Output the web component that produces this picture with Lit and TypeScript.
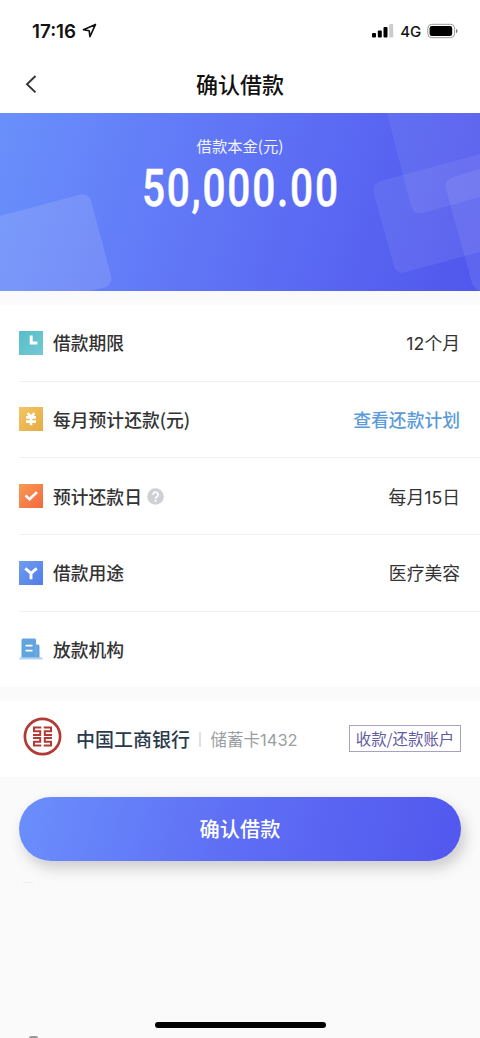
import { LitElement, html, css, svg } from "lit";
import { customElement, property } from "lit/decorators.js";

const icons: Record<string, unknown> = {
  term: svg`<defs><linearGradient id="g" x1="0" y1="0" x2="1" y2="1"><stop offset="0" stop-color="#55bfc9"/><stop offset="1" stop-color="#75c8d3"/></linearGradient></defs>
    <rect width="24" height="24" fill="url(#g)"/><path d="M12.2 4.4v7.6h6.2" fill="none" stroke="#fff" stroke-width="3"/>`,
  monthly: svg`<defs><linearGradient id="g" x1="0" y1="0" x2="1" y2="1"><stop offset="0" stop-color="#f3c562"/><stop offset="1" stop-color="#e5ab46"/></linearGradient></defs>
    <rect width="24" height="24" fill="url(#g)"/><path d="M8.6 6.200L12 10l3.400-3.800M7 10.400h10M7 14.600h10M12 9.800v8.400" fill="none" stroke="#fff" stroke-width="2.600"/>`,
  day: svg`<defs><linearGradient id="g" x1="0" y1="0" x2="1" y2="1"><stop offset="0" stop-color="#f79a55"/><stop offset="1" stop-color="#f4683f"/></linearGradient></defs>
    <rect width="24" height="24" fill="url(#g)"/><path d="M6.500 11.400l4 3.900 7.400-7" fill="none" stroke="#fff" stroke-width="2.600"/>`,
  purpose: svg`<defs><linearGradient id="g" x1="0" y1="0" x2="1" y2="1"><stop offset="0" stop-color="#6f9df0"/><stop offset="1" stop-color="#527ce6"/></linearGradient></defs>
    <rect width="24" height="24" fill="url(#g)"/><path d="M6.300 7.400l5.700 4.900 5.700-4.900M12 11.500v6.800" fill="none" stroke="#fff" stroke-width="2.900"/>`,
  lender: svg`<path d="M1 20.300h22l1 2.200H0z" fill="#b5d3f2"/><path d="M4 1.500h11.500a1.500 1.500 0 0 1 1.500 1.500v4.500h2a1.500 1.500 0 0 1 1.500 1.500v11.500H2.500V3A1.500 1.500 0 0 1 4 1.500z" fill="#62a4df"/>
    <path d="M17 7.500v13" stroke="#8abbe8" stroke-width=".6"/><path d="M6.500 8.600h7M6.500 13.600h7" stroke="#fff" stroke-width="1.800"/>`,
};

@customElement("loan-row")
class LoanRow extends LitElement {
  @property() icon = "";
  @property() label = "";
  @property() value = "";
  @property({ type: Boolean }) link = false;
  @property({ type: Boolean }) help = false;

  static styles = css`
    :host { display: flex; height: 76.650px; margin-left: 19px; padding-right: 20px; box-sizing: border-box; align-items: center; border-bottom: 1px solid #f1f1f1; font-size: 17.800px; line-height: 26px; color: #333; }
    :host([last]) { border-bottom-color: transparent; }
    .icon { width: 24px; height: 24px; margin-right: 10px; flex: none; }
    .label { margin-top: -1px; font-weight: 500; font-family: "Noto Sans CJK SC", sans-serif; white-space: nowrap; }
    .help { width: 17px; height: 17px; margin: 0 0 0 5px; }
    .value { margin: 3px 0 0 auto; white-space: nowrap; }
    .link { color: #5b9bd8; font-weight: 500; }
  `;

  render() {
    return html`
      <svg class="icon" viewBox="0 0 24 24">${icons[this.icon]}</svg>
      <span class="label">${this.label}</span>
      ${this.help
        ? html`<svg class="help" viewBox="0 0 17 17"><circle cx="8.500" cy="8.500" r="8.300" fill="#cdd1d5"/><path d="M5.900 6.700a2.600 2.500 0 1 1 4 2.100c-1 .600-1.400 1-1.400 2" fill="none" stroke="#fff" stroke-width="1.700"/><circle cx="8.500" cy="12.900" r="1.050" fill="#fff"/></svg>`
        : ""}
      <span class="value ${this.link ? "link" : ""}">${this.value}</span>
    `;
  }
}

@customElement("app-root")
class AppRoot extends LitElement {
  static styles = css`
    :host { display: flex; flex-direction: column; width: 100%; height: 1038px; overflow: hidden; background: #fafafa; font-family: Inter, "Noto Sans CJK SC", sans-serif; color: #333; }
    .status { display: flex; height: 61px; padding: 0 22px 0 32px; box-sizing: border-box; align-items: center; background: #fff; color: #111; }
    .time { width: 47px; margin-top: 1px; font-size: 18.800px; font-weight: 600; white-space: nowrap; }
    .arrow { width: 15px; height: 15px; margin-left: 3px; }
    .signal { width: 22px; height: 15px; margin-left: auto; }
    .net { margin: 1px 6px 0 6px; font-size: 15px; font-weight: 500; letter-spacing: -0.100px; }
    .battery { width: 31px; height: 16px; }
    .nav { display: grid; grid-template-columns: 60px 1fr 60px; height: 52px; align-items: center; background: #fff; }
    .back { width: 12px; height: 20px; margin: -7px 0 0 25px; }
    .title { margin-top: -8px; text-align: center; font-size: 22px; font-weight: 500; color: #111; }
    .hero { display: grid; height: 178px; flex: none; overflow: hidden; }
    .hero > * { grid-area: 1 / 1; }
    .art { width: 100%; height: 178px; }
    .sum { display: flex; flex-direction: column; align-items: center; color: #fff; z-index: 1; }
    .caption { margin-top: 20px; font-size: 15.300px; line-height: 24px; font-family: "Noto Sans CJK SC", sans-serif; opacity: .92; }
    .amount { margin: 1.500px 0 0 2px; font: 500 52px/60px Roboto, sans-serif; letter-spacing: 2.300px; transform: scaleX(.78); -webkit-text-stroke: .5px #fff; }
    .gap { height: 14px; flex: none; background: linear-gradient(#fafafa 70%, #fcfcfc); }
    .list { flex: none; height: 382px; background: #fff; }
    .card { display: flex; height: 76px; padding: 0 19px 0 23px; box-sizing: border-box; flex: none; align-items: center; background: #fff; white-space: nowrap; }
    .logo { width: 39px; height: 39px; margin: -6px 14px 0 0; }
    .bank { margin-top: -2px; font-size: 19px; font-weight: 500; color: #2b3a4b; }
    .bar { width: 1.500px; height: 15px; margin: 1px 10px 0 9px; background: #dedfe2; }
    .number { margin-top: -1px; font-size: 16.500px; color: #9b9ea3; }
    .tag { margin: -1px 0 0 auto; width: 112px; height: 27px; box-sizing: border-box; border: 1px solid #a6a2c6; text-align: center; font: 15.400px/24px "Noto Sans CJK SC", sans-serif; color: #625b9f; }
    .confirm { flex: none; height: 64px; margin: 19.500px 19px 0 19px; padding: 0; border: 0; border-radius: 32px; background: linear-gradient(105deg, #6b8ffc, #5f70f5 45%, #5257ee); box-shadow: 4px 7px 14px rgba(60, 60, 60, .24); color: #fff; font: 500 20.200px/63px "Noto Sans CJK SC", sans-serif; }
    .trace { width: 10px; height: 1px; margin: 21px 0 0 23px; background: #eee; }
    .bottom { display: grid; grid-template-columns: 155px 171px 1fr; height: 16px; margin-top: auto; }
    .home { height: 6px; border-radius: 3px; background: #000; }
    .edge { align-self: end; width: 9px; height: 2px; margin-left: 29px; border-radius: 5px 5px 0 0; background: #999; }
  `;

  render() {
    return html`
      <div class="status">
        <span class="time">17:16</span>
        <svg class="arrow" viewBox="0 0 14 14"><path d="M12.600 1.300L1.300 6.300l5.400.9.700 5.500z" fill="none" stroke="#111" stroke-width="1.500" stroke-linejoin="round"/></svg>
        <svg class="signal" viewBox="0 0 22 15"><g fill="#000"><rect x="0" y="10" width="4" height="4.500" rx="1"/><rect x="5.800" y="7.500" width="4" height="7" rx="1"/><rect x="11.500" y="4" width="4" height="10.500" rx="1"/></g><rect x="17.200" y="1" width="4" height="13.500" rx="1" fill="#ccc"/></svg>
        <span class="net">4G</span>
        <svg class="battery" viewBox="0 0 31 16"><rect x=".8" y="1.300" width="26.800" height="13.400" rx="4" fill="none" stroke="#999" stroke-width="1"/><rect x="2.600" y="3" width="22.600" height="10" rx="2.300"/><path d="M29 6v4.200q1.500-.5 1.500-2.100T29 6z" fill="#777"/></svg>
      </div>
      <div class="nav">
        <svg class="back" viewBox="0 0 12 20"><path d="M10.500 2L2 10.200l8.500 8.200" fill="none" stroke="#333" stroke-width="1.900"/></svg>
        <span class="title">确认借款</span>
      </div>
      <div class="hero">
        <svg class="art" viewBox="0 0 480 178" preserveAspectRatio="none">
          <defs><linearGradient id="hero" gradientUnits="userSpaceOnUse" x1="0" y1="30" x2="460" y2="178"><stop offset="0" stop-color="#698ffb"/><stop offset=".45" stop-color="#6075f6"/><stop offset="1" stop-color="#5158ed"/></linearGradient></defs>
          <rect width="480" height="178" fill="url(#hero)"/>
          <g fill="#fff">
            <rect x="-9" y="92" width="112" height="96" rx="9" transform="rotate(-15 47 140)" fill-opacity=".12"/>
            <path d="M387 0l24 93q3 9 12 7l57-16V0z" fill-opacity=".07"/>
            <path d="M480 41l-99 27q-9 3-7 13l20 72q3 9 12 6l74-20z" fill-opacity=".07"/>
            <path d="M480 56l-27 8q-9 3-7 12l26 94q3 7 8 8z" fill-opacity=".08"/>
          </g>
        </svg>
        <div class="sum">
          <div class="caption">借款本金(元)</div>
          <div class="amount">50,000.00</div>
        </div>
      </div>
      <div class="gap"></div>
      <div class="list">
        <loan-row icon="term" label="借款期限" value="12个月"></loan-row>
        <loan-row icon="monthly" label="每月预计还款(元)" value="查看还款计划" link></loan-row>
        <loan-row icon="day" label="预计还款日" value="每月15日" help></loan-row>
        <loan-row icon="purpose" label="借款用途" value="医疗美容"></loan-row>
        <loan-row icon="lender" label="放款机构" last></loan-row>
      </div>
      <div class="gap"></div>
      <div class="card">
        <svg class="logo" viewBox="0 0 39 39"><circle cx="19.500" cy="19.500" r="17.600" fill="none" stroke="#b23a34" stroke-width="2.700"/>
          <g fill="none" stroke="#b23a34" stroke-width="2"><path d="M18.300 10.500H11v3.800h6.200v3.700H10M10 21h7.200v3.700H11v3.800h7.300"/><path d="M20.700 10.500H28v3.800h-6.200v3.700H29M29 21h-7.200v3.700H28v3.800h-7.300"/></g></svg>
        <span class="bank">中国工商银行</span>
        <span class="bar"></span>
        <span class="number">储蓄卡1432</span>
        <span class="tag">收款/还款账户</span>
      </div>
      <button class="confirm">确认借款</button>
      <div class="trace"></div>
      <div class="bottom"><span class="edge"></span><span class="home"></span></div>
    `;
  }
}
